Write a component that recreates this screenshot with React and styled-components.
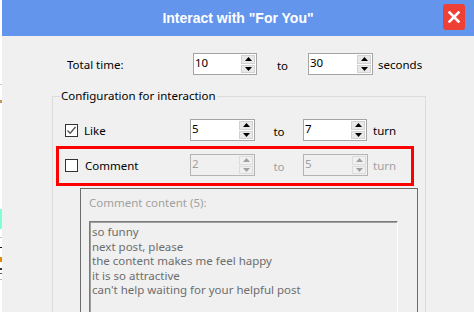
import React from 'react';
import styled, { createGlobalStyle } from 'styled-components';

const Global = createGlobalStyle`
  html, body { margin: 0; padding: 0; background: #fff; }
  body { font-family: "Noto Sans", "Liberation Sans", sans-serif; }
`;

const Root = styled.div`
  width: 474px;
  height: 312px;
  overflow: hidden;
  display: flex;
  background: #fff;
`;

const Strip = styled.div`
  width: 2px;
  flex: none;
  display: flex;
  flex-direction: column;
  background: #fff;
`;

const StripBit = styled.div`
  flex: none;
  height: ${(p) => p.$h}px;
  background: ${(p) => p.$c || 'transparent'};
`;

const Dialog = styled.div`
  flex: 1;
  min-width: 0;
  display: flex;
  flex-direction: column;
  background: #f0f0f0;
`;

const TitleBar = styled.div`
  height: 36px;
  flex: none;
  background: #6495ed;
  display: grid;
  grid-template-columns: 1fr auto 1fr;
  align-items: center;
`;

const Title = styled.div`
  grid-column: 2;
  color: #fff;
  font: bold 14px "Liberation Sans", Arial, sans-serif;
  margin-top: -1px;
`;

const Close = styled.div`
  grid-column: 3;
  justify-self: end;
  align-self: start;
  margin: 4px 9px 0 0;
  width: 22px;
  height: 26px;
  border-radius: 3px;
  background: #ee4034;
  display: flex;
  align-items: center;
  justify-content: center;
`;

const Body = styled.div`
  padding-top: 17px;
  display: flex;
  flex-direction: column;
  font-size: 11.5px;
  color: #000;
`;

const Row = styled.div`
  display: flex;
  align-items: center;
  height: 22px;
  padding-left: ${(p) => p.$indent}px;
  color: ${(p) => (p.$disabled ? '#a0a0a0' : '#000')};
`;

const LabelCell = styled.div`
  flex: none;
  width: ${(p) => p.$w}px;
  display: flex;
  align-items: center;
  gap: ${(p) => p.$gap || 6}px;
  color: #000;
`;

const ToCell = styled.div`
  flex: none;
  width: ${(p) => p.$w}px;
  text-align: center;
  padding-top: 2px;
`;

const Unit = styled.div`
  margin-left: ${(p) => p.$gap}px;
`;

const SpinBox = styled.div`
  flex: none;
  width: ${(p) => p.$w}px;
  height: ${(p) => p.$h || 22}px;
  box-sizing: border-box;
  border: 1px solid ${(p) => (p.$disabled ? '#b4b4b4' : '#a4a4a4')};
  background: ${(p) => (p.$disabled ? '#f0f0f0' : '#fff')};
  display: flex;
`;

const SpinValue = styled.div`
  flex: 1;
  padding-left: 1px;
  line-height: 18px;
  color: ${(p) => (p.$disabled ? '#a0a0a0' : '#000')};
`;

const SpinButtons = styled.div`
  width: 15px;
  flex: none;
  display: flex;
  flex-direction: column;
  gap: 1px;
  padding: 1px 1px 1px 0;
  box-sizing: border-box;
`;

const SpinBtn = styled.div`
  flex: 1;
  background: ${(p) => (p.$disabled ? '#f0f0f0' : '#e9e9e9')};
  border: 1px solid ${(p) => (p.$disabled ? '#dcdcdc' : '#d2d2d2')};
  display: flex;
  align-items: center;
  justify-content: center;
`;

const Box = styled.span`
  width: 13px;
  height: 13px;
  box-sizing: border-box;
  border: 1px solid #333;
  background: #fff;
  display: inline-flex;
  align-items: center;
  justify-content: center;
  flex: none;
`;

const Group = styled.fieldset`
  margin: 13px 0 0 50px;
  width: 374px;
  height: 240px;
  min-width: 0;
  box-sizing: border-box;
  border: 1px solid #dcdcdc;
  padding: 15px 0 0 3px;
`;

const Legend = styled.legend`
  margin-left: 4px;
  padding: 0 1px;
  line-height: 16px;
  color: #000;
`;

const Highlight = styled.div`
  margin-top: 5px;
  width: 358px;
  box-sizing: border-box;
  border: 3px solid #ff0000;
  padding: 5px 0 7px 6px;
`;

const ContentBox = styled.div`
  margin: 2px 0 0 24px;
  width: 338px;
  height: 140px;
  box-sizing: border-box;
  border: 1px solid #6b6b6b;
  border-bottom: none;
  padding: 6px 0 0 8px;
`;

const ContentLabel = styled.div`
  line-height: 16px;
  color: #a0a0a0;
`;

const TextArea = styled.div`
  margin-top: 10px;
  width: 309px;
  height: 110px;
  box-sizing: border-box;
  border: 1px solid;
  border-color: #7a7a7a #fff #fff #7a7a7a;
  box-shadow: inset 1px 1px 0 #a0a0a0;
  padding: 3px 0 0 2px;
  color: #6d6d6d;
  line-height: 14.5px;
`;

const Arrow = ({ up, color }) => (
  <svg width="7" height="4" viewBox="0 0 7 4">
    {up ? <polygon points="0,4 7,4 3.5,0" fill={color} /> : <polygon points="0,0 7,0 3.5,4" fill={color} />}
  </svg>
);

const Spin = ({ value, w, disabled }) => {
  const c = disabled ? '#a0a0a0' : '#000';
  return (
    <SpinBox $w={w} $disabled={disabled}>
      <SpinValue $disabled={disabled}>{value}</SpinValue>
      <SpinButtons>
        <SpinBtn $disabled={disabled}><Arrow up color={c} /></SpinBtn>
        <SpinBtn $disabled={disabled}><Arrow color={c} /></SpinBtn>
      </SpinButtons>
    </SpinBox>
  );
};

const Check = ({ checked }) => (
  <Box>
    {checked && (
      <svg width="11" height="11" viewBox="0 0 11 11">
        <polyline points="1.5,5.5 4.2,8.2 9.5,2" fill="none" stroke="#555" strokeWidth="1.4" />
      </svg>
    )}
  </Box>
);

const stripBits = [
  { h: 84 }, { h: 1, c: '#c8c8c8' }, { h: 15 }, { h: 3, c: '#c9935a' }, { h: 106 },
  { h: 20, c: '#7fffd4' }, { h: 8 }, { h: 1, c: '#c8c8c8' }, { h: 9 }, { h: 1, c: '#111' },
  { h: 9 }, { h: 5, c: '#e08a00' }, { h: 6 }, { h: 2, c: '#333' }, { h: 3 }, { h: 1, c: '#555' },
  { h: 5 }, { h: 1, c: '#bbb' },
];

const comments = [
  'so funny',
  'next post, please',
  'the content makes me feel happy',
  'it is so attractive',
  "can't help waiting for your helpful post",
];

export default function App() {
  return (
    <>
      <Global />
      <Root>
        <Strip>
          {stripBits.map((b, i) => (
            <StripBit key={i} $h={b.h} $c={b.c} />
          ))}
        </Strip>
        <Dialog>
          <TitleBar>
            <Title>Interact with "For You"</Title>
            <Close>
              <svg width="12" height="12" viewBox="0 0 12 12">
                <path d="M1.5 1.5 L10.5 10.5 M10.5 1.5 L1.5 10.5" stroke="#fff" strokeWidth="2.6" strokeLinecap="square" />
              </svg>
            </Close>
          </TitleBar>
          <Body>
            <Row $indent={65}>
              <LabelCell $w={126}>Total time:</LabelCell>
              <Spin value="10" w={64} />
              <ToCell $w={51}>to</ToCell>
              <Spin value="30" w={65} />
              <Unit $gap={5}>seconds</Unit>
            </Row>
            <Group>
              <Legend>Configuration for interaction</Legend>
              <Row $indent={9}>
                <LabelCell $w={125}>
                  <Check checked />
                  <span>Like</span>
                </LabelCell>
                <Spin value="5" w={65} />
                <ToCell $w={48}>to</ToCell>
                <Spin value="7" w={64} />
                <Unit $gap={6}>turn</Unit>
              </Row>
              <Highlight>
                <Row $indent={0} $disabled>
                  <LabelCell $w={125} $gap={7}>
                    <Check />
                    <span>Comment</span>
                  </LabelCell>
                  <Spin value="2" w={65} disabled />
                  <ToCell $w={48}>to</ToCell>
                  <Spin value="5" w={65} disabled />
                  <Unit $gap={5}>turn</Unit>
                </Row>
              </Highlight>
              <ContentBox>
                <ContentLabel>Comment content (5):</ContentLabel>
                <TextArea>
                  {comments.map((c) => (
                    <div key={c}>{c}</div>
                  ))}
                </TextArea>
              </ContentBox>
            </Group>
          </Body>
        </Dialog>
      </Root>
    </>
  );
}
